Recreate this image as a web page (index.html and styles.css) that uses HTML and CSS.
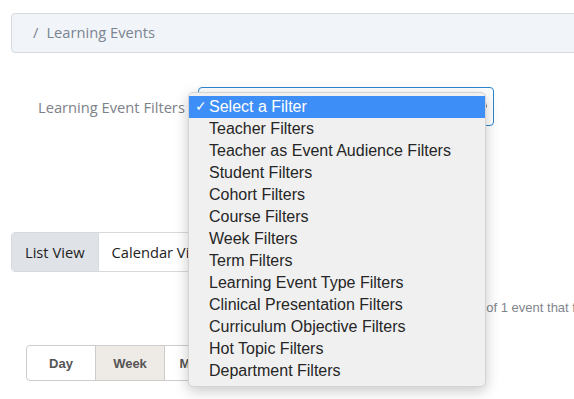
FILE: index.html
```html
<!DOCTYPE html>
<html lang="en">
<head>
  <meta charset="UTF-8" />
  <title>Learning Events</title>
  <link rel="stylesheet" href="styles.css">
</head>
<body>
  <div class="page">
    <div class="breadcrumb">
      <span class="crumb-sep">/</span>
      <span class="crumb">Learning Events</span>
    </div>

    <div class="filter-row">
      <label class="filter-label">Learning Event Filters</label>
      <div class="select">
        <span class="select-arrow"></span>
        <ul class="menu">
          <li class="menu-item selected">Select a Filter</li>
          <li class="menu-item">Teacher Filters</li>
          <li class="menu-item">Teacher as Event Audience Filters</li>
          <li class="menu-item">Student Filters</li>
          <li class="menu-item">Cohort Filters</li>
          <li class="menu-item">Course Filters</li>
          <li class="menu-item">Week Filters</li>
          <li class="menu-item">Term Filters</li>
          <li class="menu-item">Learning Event Type Filters</li>
          <li class="menu-item">Clinical Presentation Filters</li>
          <li class="menu-item">Curriculum Objective Filters</li>
          <li class="menu-item">Hot Topic Filters</li>
          <li class="menu-item">Department Filters</li>
        </ul>
      </div>
    </div>

    <div class="view-tabs">
      <div class="tab active">List View</div>
      <div class="tab">Calendar View</div>
    </div>

    <div class="summary">Showing 1 of 1 event that fall within this week.</div>

    <div class="range-group">
      <div class="range-btn">Day</div>
      <div class="range-btn active">Week</div>
      <div class="range-btn">Month</div>
    </div>
  </div>
</body>
</html>
```

FILE: styles.css
```css
html, body {
  margin: 0;
  padding: 0;
  background: #fff;
  overflow: hidden;
  font-family: "Open Sans", sans-serif;
}

.page {
  width: 574px;
  height: 399px;
  overflow: hidden;
  padding: 13px 0 0 11px;
  box-sizing: border-box;
}

.breadcrumb {
  width: 620px;
  height: 40px;
  box-sizing: border-box;
  background: #f1f4f8;
  border: 1px solid #d7dadd;
  border-radius: 4px;
  display: flex;
  align-items: center;
  padding: 0 0 2px 21px;
  color: #7b8491;
  font-size: 14.7px;
}

.crumb-sep {
  margin-right: 8px;
}

.filter-row {
  display: flex;
  align-items: center;
  margin-top: 34px;
  padding-left: 27px;
}

.filter-label {
  color: #7d8188;
  font-size: 14.7px;
  width: 160px;
  white-space: nowrap;
}

.select {
  position: relative;
  width: 296px;
  height: 39px;
  box-sizing: border-box;
  border: 1px solid #2d86cf;
  border-radius: 4px;
}

.select-arrow {
  position: absolute;
  right: 5px;
  top: 14px;
  width: 0;
  height: 0;
  border-left: 3px solid transparent;
  border-right: 3px solid transparent;
  border-top: 6px solid #111;
  transform: rotate(-35deg);
}

.menu {
  position: absolute;
  left: -11px;
  top: 4px;
  width: 298px;
  margin: 0;
  padding: 3px 0 4px;
  list-style: none;
  background: #f0f0f0;
  border: 1px solid #d4d4d4;
  border-radius: 5px;
  box-shadow: 0 4px 14px rgba(0, 0, 0, 0.22);
  box-sizing: border-box;
  z-index: 5;
  font-family: "Liberation Sans", Arial, sans-serif;
  font-size: 16px;
  color: #262626;
}

.menu-item {
  height: 22px;
  line-height: 21px;
  padding-left: 20px;
  white-space: nowrap;
}

.menu-item.selected {
  position: relative;
  background: #3d8ef6;
  color: #fff;
}

.menu-item.selected::before {
  content: "\2713";
  position: absolute;
  left: 6px;
  font-size: 14px;
}

.view-tabs {
  display: flex;
  width: 300px;
  height: 40px;
  margin-top: 106px;
  border: 1px solid #d7dadd;
  border-radius: 4px;
  box-sizing: border-box;
  overflow: hidden;
  font-size: 14.7px;
  color: #222;
}

.tab {
  display: flex;
  align-items: center;
  padding: 0 13px;
}

.tab.active {
  background: #dfe3e8;
  border-right: 1px solid #d7dadd;
}

.summary {
  margin-top: 28px;
  padding-left: 411px;
  font-family: "Liberation Sans", Arial, sans-serif;
  font-size: 13px;
  color: #80858c;
  white-space: nowrap;
  height: 16px;
}

.range-group {
  display: flex;
  margin-top: 29px;
  margin-left: 15px;
  width: 220px;
  height: 36px;
  border: 1px solid #ccc;
  border-radius: 4px;
  box-sizing: border-box;
  overflow: hidden;
  font-family: "Liberation Sans", Arial, sans-serif;
  font-weight: bold;
  font-size: 13px;
  color: #555;
}

.range-btn {
  width: 68px;
  display: flex;
  align-items: center;
  justify-content: center;
  border-right: 1px solid #ccc;
}

.range-btn.active {
  background: #eeebe6;
}
```
